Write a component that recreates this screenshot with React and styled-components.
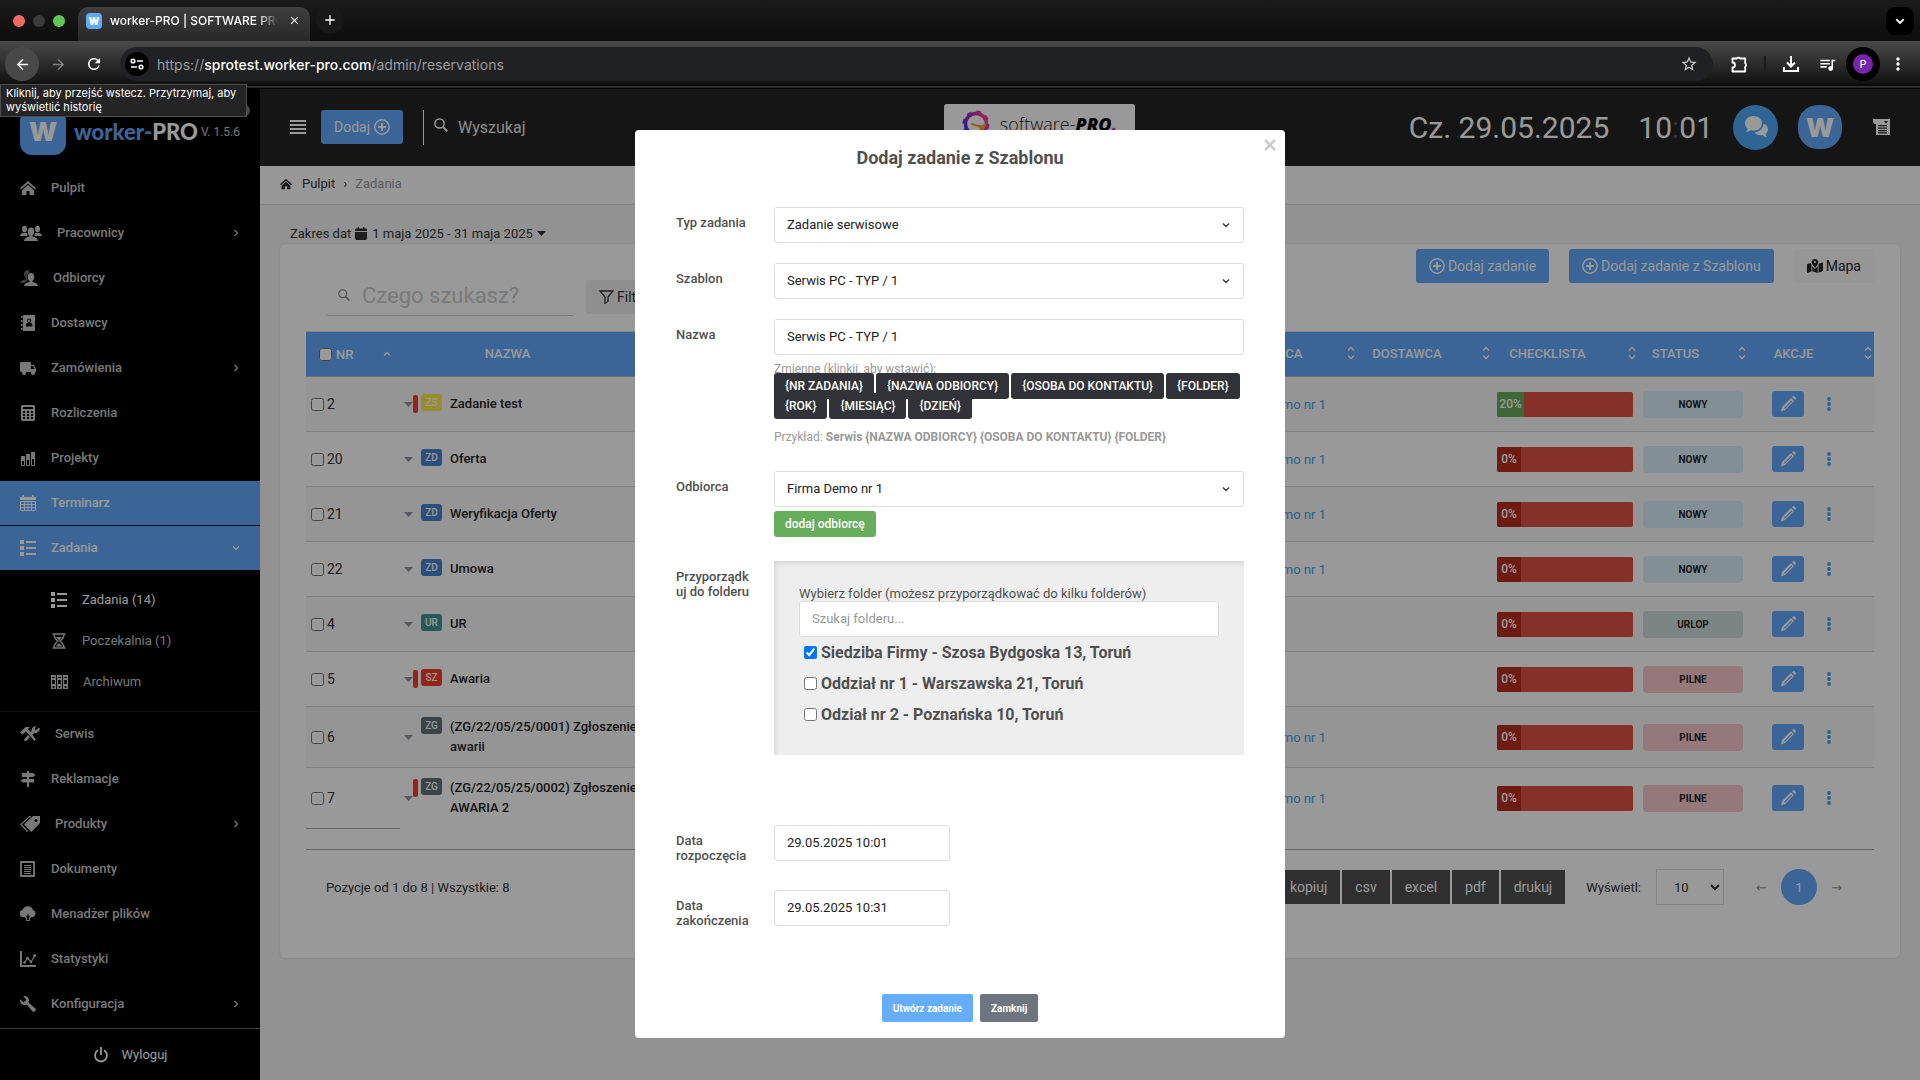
import React, { useState } from "react";
import styled, { createGlobalStyle, css } from "styled-components";
import {
  MdArrowBack,
  MdArrowForward,
  MdRefresh,
  MdStarBorder,
  MdQueueMusic,
  MdMoreVert,
  MdClose,
  MdAdd,
} from "react-icons/md";
import { ImTruck, ImWrench } from "react-icons/im";
import { FaMapLocationDot } from "react-icons/fa6";

const GlobalStyle = createGlobalStyle`
  * {
    box-sizing: border-box;
  }
  body {
    margin: 0;
    font-family: Roboto, "Liberation Sans", sans-serif;
    font-size: 13px;
    color: #333;
    background: #f3f3f3;
  }
  button, input, select {
    font-family: inherit;
  }
`;

/* ---------- Icons ---------- */

const Svg = ({ w = 16, h = 16, box, children }) => (
  <svg width={w} height={h} viewBox={box || `0 0 ${w} ${h}`} fill="currentColor" aria-hidden="true">
    {children}
  </svg>
);

const line = (width = 1.5) => ({ fill: "none", stroke: "currentColor", strokeWidth: width });

const HomeIcon = ({ size = 16 }) => (
  <Svg w={size} h={size} box="0 0 16 16">
    <path d="M8 1 0 8.2 1.2 9.6 8 3.6l6.8 6L16 8.2Z" />
    <path d="M8 5 2 10.3V15h4.5v-4h3v4H14v-4.7Z" />
  </Svg>
);

const UsersIcon = () => (
  <Svg w={22}>
    <ellipse cx="4.5" cy="4" rx="2.5" ry="3.2" />
    <ellipse cx="17.5" cy="4" rx="2.5" ry="3.2" />
    <path d="M0 11c0-2 1.500-2.800 3.500-3.200h2.500c1 .3 1.500 1 1.500 3.200ZM22 11c0-2-1.500-2.800-3.500-3.200H16c-1 .3-1.500 1-1.500 3.200Z" />
    <ellipse cx="11" cy="6.500" rx="3.2" ry="4" />
    <path d="M9.500 9h3v2.500c3 .3 5 1.500 5.500 4.500H4c.5-3 2.500-4.200 5.500-4.500Z" />
  </Svg>
);

const UserPairIcon = () => (
  <Svg w={18}>
    <path
      opacity="0.5"
      d="M8.500 0C5.500 0 4 1.500 4 4c0 2 .8 3.500 2 4.200v1C3 9.700.5 10.500 0 13h4.500c1-1.500 2.500-2 3.500-2.500-1.500-2-2-6 2-8Z"
    />
    <ellipse cx="11" cy="7" rx="3.3" ry="4" />
    <path d="M9.500 10h3v2c3 .3 5 1.500 5.500 4H4c.5-2.500 2.500-3.700 5.500-4Z" />
  </Svg>
);

const AddressIcon = () => (
  <Svg>
    <path
      fillRule="evenodd"
      d="M3 0h12v16H3Zm6 3.500a2 2 0 0 0-2 2c0 1 .4 1.700 1 2.100C6.700 8 6 9 6 11.500h6.500C12.500 9 11.500 8 10.300 7.600c.5-.4.8-1.100.8-2.100 0-1.200-1-2-2.100-2Zm0 1c.6 0 1 .4 1 1.200S9.600 7.300 9 7.300s-1-.7-1-1.600.4-1.200 1-1.200Z"
    />
    <path d="M1 1h1.500v2H1Zm0 4h1.500v2H1Zm0 4h1.500v2H1Zm0 4h1.500v2H1Z" />
  </Svg>
);

const CalculatorIcon = () => (
  <Svg>
    <path
      fillRule="evenodd"
      d="M2 0h12l1 1v14l-1 1H2l-1-1V1Zm1 2v2h10V2ZM3 6v2h2V6Zm4 0v2h2V6Zm4 0v2h2V6ZM3 9v2h2V9Zm4 0v2h2V9Zm4 0v2h2V9Zm-8 3v2h2v-2Zm4 0v2h2v-2Zm4 0v2h2v-2Z"
    />
  </Svg>
);

const ProjectsIcon = () => (
  <Svg>
    <path d="M1 6h4v5H1Zm5-2h4v6H6Zm5-2h4v7h-4Z" />
    <path {...line(1)} d="M1.500 10.500v5h3v-5M6.500 9.500v6h3v-6M11.500 8.500v7h3v-7" />
  </Svg>
);

const CalendarIcon = () => (
  <Svg>
    <path d="M0 2h16v3H0ZM2.500 0H4v3H2.500ZM12 0h1.500v3H12Z" />
    <path {...line(1)} d="M.5 6.500h15v9H.5ZM.5 9.500h15M.5 12.500h15M4.500 6.500v9M8 6.500v9M11.500 6.500v9" />
  </Svg>
);

const ListIcon = () => (
  <Svg>
    <path d="M0 0h4v4H0Zm0 6h4v4H0Zm0 6h4v4H0ZM6 1h10v2H6Zm0 6h10v2H6Zm0 6h10v2H6Z" />
  </Svg>
);

const HourglassIcon = () => (
  <Svg>
    <path {...line(1.5)} d="M1.500 1h13M1.500 15h13M3 1c0 4 1.500 5 4 7-2.500 2-4 3-4 7M13 1c0 4-1.500 5-4 7 2.500 2 4 3 4 7" />
    <path d="M5 4h6L8 7.500ZM4.500 13.500 8 10l3.500 3.500Z" />
  </Svg>
);

const ArchiveIcon = () => (
  <Svg w={17}>
    <path
      fillRule="evenodd"
      d="M0 1h5v14H0Zm1.200 2v1h2.600V3Zm0 3v4h2.600V6Zm1.300 6a1 1 0 1 0 .01 0ZM6 1h5v14H6Zm1.200 2v1h2.600V3Zm0 3v4h2.600V6Zm1.300 6a1 1 0 1 0 .01 0ZM12 1h5v14h-5Zm1.200 2v1h2.600V3Zm0 3v4h2.600V6Zm1.300 6a1 1 0 1 0 .01 0Z"
    />
  </Svg>
);

const ToolsIcon = () => (
  <Svg w={20}>
    <path d="M0 6.500 5.500 1H10L8 3l8 10.500L14.500 15 6 5.500 2.500 8.500Z" />
    <path d="M18.500 1.500 16.500 4 15 3.500 14.800 2 16.500.3c-3-.6-5 1.500-4.600 4L9.500 7l2 2.500L14.500 7c2.800.4 5.500-2 5.300-4.500ZM8 9l2 2-3 3.500c-.8 1.300-3 1-3-1Z" />
  </Svg>
);

const SignIcon = () => (
  <Svg>
    <path d="M7 0h2v16H7Z" />
    <path d="M2 2h11l2.500 2L13 6H2ZM14 8v3.500H3L.5 9.700 3 8Z" />
  </Svg>
);

const TagsIcon = () => (
  <Svg w={20}>
    <path fillRule="evenodd" d="M13 0h7v7l-8.500 9L4 8.500ZM16 3a1.500 1.500 0 1 0 .01 0Z" />
    <path {...line(1.2)} d="M11 .6H9.500L1 8.500 7.500 15.500" />
  </Svg>
);

const DocIcon = () => (
  <Svg>
    <path {...line(1.8)} d="M1 1h13v14H1Z" />
    <path {...line(1)} d="M4 4.500h7M4 6.500h7M4 8.500h7M4 10.500h7M4 12.500h7" />
  </Svg>
);

const CloudIcon = () => (
  <Svg>
    <path d="M3.500 11A3.500 3.500 0 0 1 2.600 4 5.500 5.500 0 0 1 13 4a3.600 3.600 0 0 1-.7 7H10.500L8 7.500 5.500 11Z" />
    <path {...line(1)} d="M8 8.500 5 11.500h1.500v3h3v-3H11Z" />
  </Svg>
);

const StatsIcon = () => (
  <Svg>
    <path d="M0 0h2v14h14v2H0Z" />
    <path {...line(1.3)} d="m4.500 11.500 3-4.500 3.500 4 4-6.500" />
    <circle cx="4.5" cy="11.5" r="1.3" />
    <circle cx="7.5" cy="7" r="1.3" />
    <circle cx="11" cy="11" r="1.3" />
    <circle cx="14.5" cy="4.5" r="1.5" />
  </Svg>
);

const PowerIcon = () => (
  <Svg>
    <path {...line(1.8)} d="M5 3.300a6 6 0 1 0 6 0M8 0v8" />
  </Svg>
);

const PlusCircleIcon = () => (
  <Svg>
    <circle {...line(1.5)} cx="8" cy="8" r="7.200" />
    <path d="M7 4h2v3h3v2H9v3H7V9H4V7h3Z" />
  </Svg>
);

const SearchIcon = ({ size = 14 }) => (
  <Svg w={size} h={size} box="0 0 14 14">
    <circle {...line(1.5)} cx="5.5" cy="5.5" r="4.600" />
    <path {...line(1.8)} d="m9 9 4.300 4.300" />
  </Svg>
);

const FilterIcon = () => (
  <Svg w={15} h={14}>
    <path {...line(1.3)} d="M1 1h13L9 7v4.500L6 13.300V7Z" />
  </Svg>
);

const Chevron = ({ dir = "down", size = 8, weight = 1.3 }) => {
  const d = { down: "m1 2.500 3 3 3-3", up: "m1 5.500 3-3 3 3", right: "m2.500 1 3 3-3 3" }[dir];
  return (
    <Svg w={size} h={size} box="0 0 8 8">
      <path {...line(weight)} d={d} />
    </Svg>
  );
};

const SortIcon = () => (
  <Svg w={8} h={14}>
    <path {...line(1.3)} d="m1 4.500 3-3 3 3M1 9.500l3 3 3-3" />
  </Svg>
);

const Caret = () => (
  <Svg w={9} h={5}>
    <path d="M0 0h9L4.500 5Z" />
  </Svg>
);

const PencilIcon = () => (
  <Svg>
    <path fillRule="evenodd" d="M1 15.500 2 11 11 2l3 3-9 9ZM4 12l.8.8 7.400-7.500-.8-.8Z" />
    <path d="m12 1.300 1-.9c.5-.4 1-.4 1.500 0l1.200 1.200c.4.5.4 1 0 1.500l-.9 1Z" />
  </Svg>
);

const KebabIcon = () => (
  <Svg w={4} h={14}>
    <circle cx="2" cy="2" r="1.900" />
    <circle cx="2" cy="7" r="1.900" />
    <circle cx="2" cy="12" r="1.900" />
  </Svg>
);

const DateIcon = () => (
  <Svg w={12} h={13}>
    <path d="M0 5h12v7l-1 1H1l-1-1ZM0 4V2.500L1 1.500h1.500V0H4v1.500h4V0h1.500v1.500H11l1 1V4Z" />
  </Svg>
);

const BubblesIcon = () => (
  <Svg w={24} h={24}>
    <path d="M9.500 1C4.500 1 1 4.200 1 8.300c0 2.200 1 4 2.500 5.200 0 1.300-.8 2.500-2 3.500 2 0 3.800-.6 5-1.700 1 .3 2 .4 3 .4 5 0 8.500-3.300 8.500-7.400S14.500 1 9.500 1Z" />
    <path d="M19.500 8.500c0 4.800-4 8.500-9 8.700 1.500 2.200 4.700 3.600 8 2.900 1 1 2.700 2 4.700 2-1-.9-1.500-1.900-1.500-3.100 1.300-1.100 2.300-2.600 2.300-4.500 0-2.700-1.800-5-4.500-6Z" />
  </Svg>
);

const ScrollIcon = () => (
  <Svg w={17}>
    <path fillRule="evenodd" d="M0 0h17v16H3V5H1.500L0 3.500ZM5 6v1.200h9V6Zm0 2.500v1.200h9V8.500ZM5 11v1.200h9V11Zm0 2.300v1.200h9v-1.200ZM11 2l2 2.500L15 2Z" />
  </Svg>
);

const TuneIcon = () => (
  <Svg w={14} h={12}>
    <circle {...line(1.6)} cx="3" cy="3" r="1.800" />
    <circle {...line(1.6)} cx="11" cy="9" r="1.800" />
    <path {...line(1.6)} d="M7 3h6M1 9h6" />
  </Svg>
);

const DownloadIcon = () => (
  <Svg>
    <path {...line(2)} d="M1 11v4h14v-4M8 0v10M4 6.500l4 4 4-4" />
  </Svg>
);

const PuzzleIcon = () => (
  <Svg w={17} h={17}>
    <path {...line(1.8)} strokeLinejoin="round" d="M1.500 2.500h4.300a1.800 1.200 0 0 1 3.400 0h5v4.800a1.200 1.800 0 0 1 0 3.400v4.800H1.500v-4a2.500 2.500 0 0 0 0-5Z" />
  </Svg>
);

const CrossIcon = () => (
  <Svg w={12} h={12}>
    <path {...line(2.5)} d="m1 1 10 10M11 1 1 11" />
  </Svg>
);

const GearLogo = () => (
  <Svg w={28} h={28}>
    <defs>
      <linearGradient id="gear" x1="0" y1="0.8" x2="1" y2="0.200">
        <stop offset="0" stopColor="#4a28f0" />
        <stop offset="0.500" stopColor="#b02fc0" />
        <stop offset="1" stopColor="#ff3d90" />
      </linearGradient>
    </defs>
    <circle cx="14" cy="14" r="10.500" fill="none" stroke="url(#gear)" strokeWidth="3.500" />
    <circle cx="14" cy="14" r="12.500" fill="none" stroke="url(#gear)" strokeWidth="2" strokeDasharray="5 4.800" />
    <path d="M8 14c3-2 6 1 9 1 3 .5 5-.5 7-2 0 6-4 9-9 9 3-2 4-4 1-5-2-1-5-1-8-3Z" fill="#f0a53a" />
  </Svg>
);

/* ---------- Browser bar ---------- */

const Screen = styled.div`
  min-height: 100vh;
  display: flex;
  flex-direction: column;
`;

const Browser = styled.header`
  position: relative;
  z-index: 3;
  font-family: Inter, "Liberation Sans", sans-serif;
  color: #fff;
  background: #151515;
`;

const TabStrip = styled.div`
  height: 41px;
  display: flex;
  align-items: flex-end;
  padding: 0 6px 0 13px;
  background: linear-gradient(#1a1a1a, #0d0d0d);
`;

const Lights = styled.div`
  display: flex;
  gap: 8px;
  height: 41px;
  align-items: center;
  margin-right: 13px;
`;

const Light = styled.span`
  width: 12px;
  height: 12px;
  border-radius: 50%;
  background: ${({ $color }) => $color};
`;

const Tab = styled.div`
  width: 232px;
  height: 34px;
  display: flex;
  align-items: center;
  gap: 8px;
  padding: 0 8px 7px;
  border-radius: 10px 10px 0 0;
  background: linear-gradient(#3f3f3f, #282828);
`;

const WLogo = styled.span`
  display: flex;
  align-items: center;
  justify-content: center;
  flex: none;
  width: ${({ $size }) => $size}px;
  height: ${({ $size }) => $size}px;
  border-radius: ${({ $radius }) => $radius}px;
  background: #62a9fa;
  color: #fff;
  font: 900 ${({ $font }) => $font}px Inter, sans-serif;
`;

const TabTitle = styled.span`
  flex: 1;
  overflow: hidden;
  white-space: nowrap;
  font-size: 12px;
  font-weight: 500;
  mask-image: linear-gradient(to right, #000 88%, transparent);
`;

const BarButton = styled.button`
  display: flex;
  align-items: center;
  justify-content: center;
  flex: none;
  width: ${({ $w }) => $w || 34}px;
  height: ${({ $h }) => $h || 34}px;
  border: 0;
  padding: 0;
  border-radius: ${({ $radius }) => $radius || "50%"};
  background: ${({ $bg }) => $bg || "none"};
  color: ${({ $color }) => $color || "#fff"};
`;

const NewTab = styled(BarButton)`
  margin: 0 auto 7px 6px;
`;

const TabSearch = styled(BarButton)`
  margin-bottom: 6px;
`;

const ToolBar = styled.div`
  height: 48px;
  display: flex;
  align-items: center;
  padding: 0 4px 2px 5px;
  background: linear-gradient(#4a4a4a, #111 43px, #000 44px, #151515 45px, #4c4c4c 46px, #000 47px);
`;

const UrlBox = styled.div`
  flex: 1;
  height: 34px;
  display: flex;
  align-items: center;
  gap: 8px;
  margin-left: 9px;
  padding: 0 12px 0 5px;
  border-radius: 17px;
  background: #202124;
  color: #9a9a9c;
  font-size: 14px;
`;

const Url = styled.span`
  flex: 1;
  b {
    font-weight: 500;
    color: #fff;
  }
`;

const BarTools = styled.div`
  display: flex;
  align-items: center;
  margin-left: 9px;
`;

const Separator = styled.span`
  width: 2px;
  height: 16px;
  background: #1c1c1c;
  margin: 0 8px;
`;

const Avatar = styled.span`
  display: flex;
  align-items: center;
  justify-content: center;
  width: 20px;
  height: 20px;
  border-radius: 50%;
  background: #7627a5;
  font-size: 11px;
`;

const Tooltip = styled.div`
  position: absolute;
  left: 0;
  top: 84px;
  width: 247px;
  padding: 1px 5px 2px;
  border: 1px solid #4d4d4d;
  background: #242424;
  font-size: 11px;
  line-height: 14px;
`;

/* ---------- Sidebar ---------- */

const Page = styled.div`
  position: relative;
  flex: 1;
  display: flex;
`;

const Sidebar = styled.aside`
  width: 260px;
  flex: none;
  display: flex;
  flex-direction: column;
  background: #000;
  color: #c8c8c8;
`;

const Brand = styled.div`
  position: relative;
  height: 77px;
  display: flex;
  align-items: center;
  padding: 8px 20px 0;
  font-size: 12px;
  white-space: nowrap;
`;

const BrandName = styled.span`
  margin: 0 3px 0 8px;
  font: 900 22px Lato, sans-serif;
  color: #fff;
  em {
    font-style: normal;
    color: #62a9fa;
  }
`;

const BrandBubble = styled.span`
  position: absolute;
  top: 15px;
  right: 10px;
  width: 14px;
  height: 13px;
  border-radius: 50%;
  background: #777;
`;

const NavItem = styled.a`
  height: 44px;
  margin-bottom: 1px;
  display: flex;
  align-items: center;
  gap: 15px;
  padding: 0 20px 1px;
  font-weight: 500;
  text-decoration: none;
  color: inherit;
  ${({ $active }) =>
    $active &&
    css`
      background: #62a9fa;
      color: #fff;
    `}
  span {
    flex: 1;
  }
`;

const SubNav = styled.div`
  padding: 8px 0 9px;
  border-bottom: 1px solid #1a1a1a;
`;

const SubItem = styled.a`
  height: 41px;
  display: flex;
  align-items: center;
  gap: 15px;
  padding-left: 51px;
  text-decoration: none;
  color: ${({ $active }) => ($active ? "#fff" : "#c8c8c8")};
`;

const Logout = styled.button`
  height: 52px;
  margin-top: auto;
  display: flex;
  align-items: center;
  justify-content: center;
  gap: 13px;
  border: 0;
  border-top: 1px solid #666;
  background: none;
  color: #fff;
  font-size: 13px;
`;

/* ---------- Main ---------- */

const Main = styled.main`
  flex: 1;
  min-width: 0;
`;

const TopBar = styled.div`
  height: 77px;
  display: grid;
  grid-template-columns: 654px 191px 1fr;
  align-items: center;
  padding: 0 30px 1px;
  background: #232323;
  color: #fff;
`;

const TopLeft = styled.div`
  display: flex;
  align-items: center;
`;

const PlainButton = styled.button`
  display: flex;
  align-items: center;
  justify-content: center;
  padding: 0;
  border: 0;
  background: none;
  color: ${({ $color }) => $color || "inherit"};
`;

const Button = styled.button`
  height: 34px;
  display: flex;
  align-items: center;
  gap: 3px;
  padding: 0 13px;
  border: 0;
  border-radius: 3px;
  background: ${({ $bg }) => $bg || "#62a9fa"};
  color: ${({ $color }) => $color || "#fff"};
  font-size: 14px;
`;

const AddButton = styled(Button)`
  gap: 4px;
  margin-left: 15px;
`;

const GlobalSearch = styled.label`
  display: flex;
  align-items: center;
  gap: 10px;
  height: 35px;
  margin-left: 20px;
  padding-left: 10px;
  border-left: 1px solid #fff;
  svg {
    margin-bottom: 4px;
  }
  input {
    width: 200px;
    padding: 0;
    border: 0;
    background: none;
    font-size: 16px;
    &::placeholder {
      color: #e6e6e6;
    }
  }
`;

const Partner = styled.div`
  height: 46px;
  display: flex;
  align-items: center;
  justify-content: center;
  gap: 10px;
  padding-bottom: 6px;
  border-radius: 3px;
  background: #fff;
  color: #222;
  font: 300 18px "Open Sans", sans-serif;
  b {
    font-weight: 800;
    font-style: italic;
    color: #000;
  }
  i {
    font-weight: 800;
    color: #d63ac0;
  }
`;

const TopRight = styled.div`
  display: flex;
  align-items: center;
  justify-content: flex-end;
  font-size: 30px;
`;

const Clock = styled.span`
  margin: 0 20px 0 29px;
  i {
    font-style: normal;
    color: #555;
  }
`;

const ChatButton = styled(PlainButton)`
  width: 45px;
  height: 45px;
  margin-right: 20px;
  border-radius: 50%;
  background: #4ea8f8;
`;

const ListButton = styled(PlainButton)`
  margin-left: 31px;
`;

const Breadcrumb = styled.nav`
  height: 39px;
  display: flex;
  align-items: center;
  gap: 8px;
  padding: 0 20px 3px;
  border-bottom: 1px solid #dadada;
  background: #fefefe;
  svg {
    margin-right: 2px;
  }
  a {
    color: inherit;
    text-decoration: none;
  }
  span {
    color: #999;
  }
`;

const Content = styled.div`
  padding: 0 20px;
`;

const DateRange = styled.button`
  height: 39px;
  display: flex;
  align-items: center;
  gap: 4px;
  padding: 18px 10px 0;
  border: 0;
  background: none;
  color: #333;
  font-size: 13px;
  span {
    margin-left: 1px;
  }
`;

const Panel = styled.section`
  padding: 5px 26px 52px;
  border-radius: 6px;
  background: #fff;
  box-shadow: 0 0 3px rgba(0, 0, 0, 0.1);
`;

const Tools = styled.div`
  height: 82px;
  display: flex;
  justify-content: space-between;
  padding-bottom: 15px;
`;

const FilterTools = styled.div`
  display: flex;
  align-items: flex-end;
  gap: 11px;
  margin-left: 20px;
`;

const TableSearch = styled.label`
  width: 249px;
  height: 41px;
  display: flex;
  align-items: center;
  gap: 12px;
  padding-left: 12px;
  border-bottom: 1px solid #ccc;
  border-radius: 3px;
  color: #888;
  input {
    width: 190px;
    padding: 0;
    border: 0;
    font-size: 22px;
    &::placeholder {
      color: #ccc;
    }
  }
`;

const FilterButton = styled(Button)`
  margin-bottom: 2px;
`;

const Actions = styled.div`
  display: flex;
  gap: 20px;
`;

const Table = styled.table`
  width: 100%;
  table-layout: fixed;
  border-collapse: collapse;
  border-bottom: 1px solid #aaa;
  td, th {
    padding: 0 5px;
    text-align: left;
  }
`;

const HeadRow = styled.tr`
  height: 45px;
  background: #62a9fa;
  border-top: 1px solid #ddd;
  border-bottom: 1px solid #bbb;
  color: #fff;
`;

const HeadCell = styled.div`
  display: flex;
  align-items: center;
  padding-bottom: 2px;
  font-weight: 500;
  span {
    flex: 1;
    text-align: center;
  }
  svg {
    flex: none;
    margin-right: -3px;
    margin-left: 30px;
  }
`;

const SelectAll = styled.label`
  display: flex;
  align-items: center;
  gap: 4px;
  padding-left: 8px;
  font-weight: 500;
  svg:last-child {
    margin-right: 4px;
    margin-left: auto;
  }
`;

const Row = styled.tr`
  height: ${({ $tall }) => ($tall ? 61 : 55)}px;
  background: ${({ $odd }) => ($odd ? "#f9f9f9" : "#fff")};
  border-bottom: 1px solid ${({ $last }) => ($last ? "transparent" : "#d9d9d9")};
  td:first-child {
    border-bottom: 1px solid ${({ $last }) => ($last ? "#aaa" : "#d9d9d9")};
  }
`;

const Spacer = styled.tr`
  height: 21px;
`;

const Check = styled.input`
  width: 13px;
  height: 13px;
  margin: 0;
`;

const RowNumber = styled.label`
  display: flex;
  align-items: center;
  gap: 3px;
  font-size: 14px;
`;

const Task = styled.div`
  display: flex;
  align-items: center;
  color: #92929f;
  svg {
    flex: none;
    margin-left: -1px;
  }
`;

const Marker = styled.span`
  flex: none;
  width: 5px;
  height: 18px;
  margin: 1px 3px 0 0;
  border-radius: 2px;
  background: ${({ $on }) => ($on ? "#f73b2b" : "transparent")};
`;

const TaskBody = styled.div`
  display: flex;
  align-items: flex-start;
  color: #222;
  font-weight: 500;
  line-height: 20px;
`;

const Badge = styled.span`
  flex: none;
  width: 21px;
  margin-right: 8px;
  border-radius: 3px;
  background: ${({ $color }) => $color};
  color: #fff;
  font-size: 10px;
  font-weight: 500;
  line-height: 17px;
  text-align: center;
`;

const Client = styled.a`
  display: block;
  padding-left: 6px;
  color: #42a5e8;
  text-decoration: none;
  white-space: nowrap;
`;

const Progress = styled.div`
  height: 25px;
  border-radius: 2px;
  overflow: hidden;
  background: #de5043;
`;

const ProgressFill = styled.div`
  min-width: 24px;
  background: ${({ $done }) => ($done ? "#66ae5b" : "#b82d1e")};
  color: #fff;
  font-size: 12px;
  font-weight: 500;
  line-height: 25px;
  text-align: center;
`;

const Status = styled.span`
  display: block;
  border-radius: 4px;
  background: ${({ $color }) => $color};
  color: #222;
  font-size: 10px;
  font-weight: 700;
  line-height: 27px;
  text-align: center;
`;

const RowActions = styled.div`
  display: flex;
  align-items: center;
  gap: 23px;
  padding-left: 19px;
`;

const EditButton = styled(PlainButton)`
  width: 32px;
  height: 26px;
  border-radius: 3px;
  background: #62a9fa;
  color: #fff;
`;

const Footer = styled.div`
  display: flex;
  align-items: center;
  justify-content: flex-end;
  padding: 19px 32px 1px 20px;
`;

const Summary = styled.span`
  margin-right: auto;
`;

const Exports = styled.div`
  display: flex;
  gap: 2px;
  margin-right: 21px;
`;

const ExportButton = styled(Button)`
  border-radius: 0;
`;

const PageSize = styled.label`
  display: flex;
  align-items: center;
  gap: 15px;
  margin-right: 32px;
  select {
    width: 68px;
    height: 36px;
    padding: 0 0 0 13px;
    border: 1px solid #ddd;
    background: #fff;
    color: #333;
    font-size: 13px;
  }
`;

const Pager = styled.div`
  display: flex;
  align-items: center;
  gap: 14px;
  color: #999;
`;

const PagerArrow = styled(PlainButton)`
  width: 11px;
  font: 13px "DejaVu Sans", sans-serif;
`;

const CurrentPage = styled.button`
  width: 36px;
  height: 36px;
  border: 0;
  border-radius: 50%;
  background: #62a9fa;
  color: #fff;
  font-size: 13px;
`;

/* ---------- Modal ---------- */

const Backdrop = styled.div`
  position: absolute;
  inset: 0;
  display: flex;
  justify-content: center;
  align-items: flex-start;
  padding-top: 41px;
  background: rgba(0, 0, 0, 0.4);
`;

const Modal = styled.div`
  position: relative;
  width: 650px;
  padding: 16px 41px;
  border-radius: 4px;
  background: #fff;
`;

const ModalTitle = styled.h2`
  margin: 0 0 37px;
  color: #505050;
  font-size: 18px;
  font-weight: 700;
  line-height: 24px;
  text-align: center;
`;

const CloseButton = styled.button`
  position: absolute;
  top: 9px;
  right: 9px;
  padding: 0;
  border: 0;
  background: none;
  color: #ccc;
  line-height: 0;
`;

const Field = styled.div`
  display: grid;
  grid-template-columns: 98px 1fr;
  margin-bottom: ${({ $gap }) => $gap || 20}px;
`;

const FieldLabel = styled.label`
  width: 76px;
  padding-top: 8px;
  color: #505050;
  font-weight: 500;
  line-height: 15px;
  overflow-wrap: anywhere;
`;

const boxed = css`
  width: 100%;
  height: 36px;
  padding: 0 12px 2px;
  border: 1px solid #ddd;
  border-radius: 3px;
  background: #fff;
  color: #222;
  font-size: 13px;
`;

const TextInput = styled.input`
  ${boxed}
  max-width: ${({ $max }) => $max || "none"};
  &::placeholder {
    color: #999;
  }
`;

const SelectBox = styled.div`
  display: grid;
  align-items: center;
  select {
    ${boxed}
    grid-area: 1 / 1;
    appearance: none;
  }
  svg {
    grid-area: 1 / 1;
    justify-self: end;
    margin-right: 14px;
    pointer-events: none;
  }
`;

const Hint = styled.div`
  color: #999;
  font-size: 12px;
  line-height: 18px;
`;

const Variables = styled.div`
  display: flex;
  flex-wrap: wrap;
  column-gap: 2px;
  margin-top: -5px;
  padding-bottom: 15px;
`;

const Chip = styled.button`
  position: relative;
  height: 26px;
  margin-bottom: -6px;
  padding: 0 11px;
  border: 0;
  border-radius: 3px;
  background: ${({ $bg }) => $bg || "#323338"};
  color: #fff;
  font-size: 12px;
  font-weight: 500;
`;

const AddClient = styled(Chip)`
  margin: 4px 0 0;
`;

const HintBlock = styled.div`
  padding-top: 5px;
`;

const FolderBox = styled.div`
  padding: 25px;
  background: #eee;
  box-shadow: inset 3px 4px 6px -3px rgba(0, 0, 0, 0.15);
  color: #505050;
  p {
    margin: 0;
    line-height: 15px;
  }
`;

const FolderOption = styled.label`
  display: flex;
  align-items: center;
  gap: 4px;
  height: 31px;
  padding-left: 5px;
  font-size: 16px;
  font-weight: 700;
`;

const ModalFooter = styled.div`
  display: flex;
  justify-content: center;
  gap: 7px;
  padding-top: 4px;
`;

const SmallButton = styled.button`
  height: 28px;
  padding: 0 11px;
  border: 0;
  border-radius: 2px;
  background: ${({ $bg }) => $bg};
  color: #fff;
  font-size: 10px;
  font-weight: 700;
`;

/* ---------- Data ---------- */

const menuTop = [
  { label: "Pulpit", icon: <HomeIcon /> },
  { label: "Pracownicy", icon: <UsersIcon />, more: "right" },
  { label: "Odbiorcy", icon: <UserPairIcon /> },
  { label: "Dostawcy", icon: <AddressIcon /> },
  { label: "Zamówienia", icon: <ImTruck size={16} />, more: "right" },
  { label: "Rozliczenia", icon: <CalculatorIcon /> },
  { label: "Projekty", icon: <ProjectsIcon /> },
  { label: "Terminarz", icon: <CalendarIcon />, active: true },
  { label: "Zadania", icon: <ListIcon />, active: true, more: "down" },
];

const menuBottom = [
  { label: "Serwis", icon: <ToolsIcon /> },
  { label: "Reklamacje", icon: <SignIcon /> },
  { label: "Produkty", icon: <TagsIcon />, more: "right" },
  { label: "Dokumenty", icon: <DocIcon /> },
  { label: "Menadżer plików", icon: <CloudIcon /> },
  { label: "Statystyki", icon: <StatsIcon /> },
  { label: "Konfiguracja", icon: <ImWrench size={16} />, more: "right" },
];

const badgeColors = { ZS: "#fbec50", ZD: "#4884cf", UR: "#3e9690", SZ: "#f73b2b", ZG: "#637177" };
const statusColors = { NOWY: "#d9f0fb", URLOP: "#cddeda", PILNE: "#f8c8cd" };

const tasks = [
  { nr: 2, type: "ZS", name: "Zadanie test", late: true, client: true, done: 20, status: "NOWY" },
  { nr: 20, type: "ZD", name: "Oferta", client: true, done: 0, status: "NOWY" },
  { nr: 21, type: "ZD", name: "Weryfikacja Oferty", client: true, done: 0, status: "NOWY" },
  { nr: 22, type: "ZD", name: "Umowa", client: true, done: 0, status: "NOWY" },
  { nr: 4, type: "UR", name: "UR", done: 0, status: "URLOP" },
  { nr: 5, type: "SZ", name: "Awaria", late: true, done: 0, status: "PILNE" },
  { nr: 6, type: "ZG", name: "(ZG/22/05/25/0001) Zgłoszenie awarii", tall: true, client: true, done: 0, status: "PILNE" },
  { nr: 7, type: "ZG", name: "(ZG/22/05/25/0002) Zgłoszenie AWARIA 2", tall: true, late: true, client: true, done: 0, status: "PILNE" },
];

const variables = ["{NR ZADANIA}", "{NAZWA ODBIORCY}", "{OSOBA DO KONTAKTU}", "{FOLDER}", "{ROK}", "{MIESIĄC}", "{DZIEŃ}"];

const folders = [
  "Siedziba Firmy - Szosa Bydgoska 13, Toruń",
  "Oddział nr 1 - Warszawska 21, Toruń",
  "Odział nr 2 - Poznańska 10, Toruń",
];

/* ---------- Components ---------- */

const BrowserBar = () => (
  <Browser>
    <TabStrip>
      <Lights>
        <Light $color="#ed6a5e" />
        <Light $color="#3b3b3b" />
        <Light $color="#61c554" />
      </Lights>
      <Tab>
        <WLogo $size={16} $radius={4} $font={10}>W</WLogo>
        <TabTitle>worker-PRO | SOFTWARE PRO</TabTitle>
        <BarButton $w={16} $h={16} aria-label="Zamknij kartę">
          <MdClose size={13} />
        </BarButton>
      </Tab>
      <NewTab $w={28} $h={28} $bg="#181818" aria-label="Nowa karta">
        <MdAdd size={16} />
      </NewTab>
      <TabSearch $w={28} $h={28} $bg="#000" $radius="9px" aria-label="Szukaj kart">
        <Chevron size={10} weight={1.5} />
      </TabSearch>
    </TabStrip>
    <ToolBar>
      <BarButton $bg="#484848" aria-label="Wstecz">
        <MdArrowBack size={17} />
      </BarButton>
      <BarButton $w={38} $color="#7d7d7d" aria-label="Dalej">
        <MdArrowForward size={17} />
      </BarButton>
      <BarButton aria-label="Odśwież">
        <MdRefresh size={18} />
      </BarButton>
      <UrlBox>
        <BarButton $w={24} $h={24} $bg="#000" aria-label="Informacje o stronie">
          <TuneIcon />
        </BarButton>
        <Url>
          https://<b>sprotest.worker-pro.com</b>/admin/reservations
        </Url>
        <BarButton $w={24} $h={24} $color="#ccc" aria-label="Dodaj do zakładek">
          <MdStarBorder size={18} />
        </BarButton>
      </UrlBox>
      <BarTools>
        <BarButton aria-label="Rozszerzenia">
          <PuzzleIcon />
        </BarButton>
        <Separator />
        <BarButton aria-label="Pobrane">
          <DownloadIcon />
        </BarButton>
        <BarButton $w={38} aria-label="Multimedia">
          <MdQueueMusic size={19} />
        </BarButton>
        <BarButton $bg="#000" aria-label="Profil">
          <Avatar>P</Avatar>
        </BarButton>
        <BarButton $w={36} aria-label="Menu">
          <MdMoreVert size={20} />
        </BarButton>
      </BarTools>
    </ToolBar>
    <Tooltip role="tooltip">Kliknij, aby przejść wstecz. Przytrzymaj, aby wyświetlić historię</Tooltip>
  </Browser>
);

const Menu = ({ items }) =>
  items.map((item) => (
    <NavItem key={item.label} href="#" $active={item.active}>
      {item.icon}
      <span>{item.label}</span>
      {item.more && <Chevron dir={item.more} />}
    </NavItem>
  ));

const SideBar = () => (
  <Sidebar>
    <Brand>
      <WLogo $size={46} $radius={12} $font={26}>W</WLogo>
      <BrandName>
        <em>worker-</em>PRO
      </BrandName>
      V. 1.5.6
      <BrandBubble />
    </Brand>
    <Menu items={menuTop} />
    <SubNav>
      <SubItem href="#" $active>
        <ListIcon /> Zadania (14)
      </SubItem>
      <SubItem href="#">
        <HourglassIcon /> Poczekalnia (1)
      </SubItem>
      <SubItem href="#">
        <ArchiveIcon /> Archiwum
      </SubItem>
    </SubNav>
    <Menu items={menuBottom} />
    <Logout>
      <PowerIcon /> Wyloguj
    </Logout>
  </Sidebar>
);

const Head = ({ children }) => (
  <th>
    <HeadCell>
      <span>{children}</span>
      <SortIcon />
    </HeadCell>
  </th>
);

const TaskTable = () => (
  <Table>
    <colgroup>
      <col width="94" />
      <col width="250" />
      <col />
      <col width="138" />
      <col width="135" />
      <col width="146" />
      <col width="110" />
      <col width="126" />
    </colgroup>
    <thead>
      <HeadRow>
        <th>
          <SelectAll>
            <Check type="checkbox" />
            NR
            <Chevron dir="up" />
          </SelectAll>
        </th>
        <Head>NAZWA</Head>
        <th />
        <Head>ODBIORCA</Head>
        <Head>DOSTAWCA</Head>
        <Head>CHECKLISTA</Head>
        <Head>STATUS</Head>
        <Head>AKCJE</Head>
      </HeadRow>
    </thead>
    <tbody>
      {tasks.map((task, i) => (
        <Row key={task.nr} $tall={task.tall} $odd={i % 2 === 0} $last={i === tasks.length - 1}>
          <td>
            <RowNumber>
              <Check type="checkbox" />
              {task.nr}
            </RowNumber>
          </td>
          <td>
            <Task>
              <Caret />
              <TaskBody>
                <Marker $on={task.late} />
                <Badge $color={badgeColors[task.type]}>{task.type}</Badge>
                <span>{task.name}</span>
              </TaskBody>
            </Task>
          </td>
          <td />
          <td>{task.client && <Client href="#">Firma Demo nr 1</Client>}</td>
          <td />
          <td>
            <Progress>
              <ProgressFill $done={task.done > 0} style={{ width: `${task.done}%` }}>
                {task.done}%
              </ProgressFill>
            </Progress>
          </td>
          <td>
            <Status $color={statusColors[task.status]}>{task.status}</Status>
          </td>
          <td>
            <RowActions>
              <EditButton aria-label="Edytuj">
                <PencilIcon />
              </EditButton>
              <PlainButton $color="#42a5e8" aria-label="Więcej">
                <KebabIcon />
              </PlainButton>
            </RowActions>
          </td>
        </Row>
      ))}
      <Spacer />
    </tbody>
  </Table>
);

const TemplateModal = () => {
  const [checked, setChecked] = useState([true, false, false]);
  const toggle = (i) => setChecked(checked.map((value, j) => (i === j ? !value : value)));

  return (
    <Backdrop>
      <Modal role="dialog" aria-labelledby="modal-title">
        <CloseButton aria-label="Zamknij okno">
          <CrossIcon />
        </CloseButton>
        <ModalTitle id="modal-title">Dodaj zadanie z Szablonu</ModalTitle>
        <Field>
          <FieldLabel htmlFor="type">Typ zadania</FieldLabel>
          <SelectBox>
            <select id="type">
              <option>Zadanie serwisowe</option>
            </select>
            <Chevron />
          </SelectBox>
        </Field>
        <Field>
          <FieldLabel htmlFor="template">Szablon</FieldLabel>
          <SelectBox>
            <select id="template">
              <option>Serwis PC - TYP / 1</option>
            </select>
            <Chevron />
          </SelectBox>
        </Field>
        <Field $gap={25}>
          <FieldLabel htmlFor="name">Nazwa</FieldLabel>
          <div>
            <TextInput id="name" defaultValue="Serwis PC - TYP / 1" />
            <HintBlock>
              <Hint>Zmienne (klinkij, aby wstawić):</Hint>
              <Variables>
                {variables.map((name) => (
                  <Chip key={name}>{name}</Chip>
                ))}
              </Variables>
              <Hint>
                Przykład: <b>Serwis {"{NAZWA ODBIORCY} {OSOBA DO KONTAKTU} {FOLDER}"}</b>
              </Hint>
            </HintBlock>
          </div>
        </Field>
        <Field $gap={24}>
          <FieldLabel htmlFor="client">Odbiorca</FieldLabel>
          <div>
            <SelectBox>
              <select id="client">
                <option>Firma Demo nr 1</option>
              </select>
              <Chevron />
            </SelectBox>
            <AddClient $bg="#66ae5b">dodaj odbiorcę</AddClient>
          </div>
        </Field>
        <Field $gap={70}>
          <FieldLabel htmlFor="folder">Przyporządkuj do folderu</FieldLabel>
          <FolderBox>
            <p>Wybierz folder (możesz przyporządkować do kilku folderów)</p>
            <TextInput id="folder" placeholder="Szukaj folderu..." />
            {folders.map((folder, i) => (
              <FolderOption key={folder}>
                <Check type="checkbox" checked={checked[i]} onChange={() => toggle(i)} />
                {folder}
              </FolderOption>
            ))}
          </FolderBox>
        </Field>
        <Field $gap={27}>
          <FieldLabel htmlFor="start">Data rozpoczęcia</FieldLabel>
          <TextInput id="start" $max="176px" defaultValue="29.05.2025 10:01" />
        </Field>
        <Field $gap={62}>
          <FieldLabel htmlFor="end">Data zakończenia</FieldLabel>
          <TextInput id="end" $max="176px" defaultValue="29.05.2025 10:31" />
        </Field>
        <ModalFooter>
          <SmallButton $bg="#65adff">Utwórz zadanie</SmallButton>
          <SmallButton $bg="#6d7680">Zamknij</SmallButton>
        </ModalFooter>
      </Modal>
    </Backdrop>
  );
};

const App = () => (
  <Screen>
    <GlobalStyle />
    <BrowserBar />
    <Page>
      <SideBar />
      <Main>
        <TopBar>
          <TopLeft>
            <PlainButton aria-label="Menu boczne">
              <Svg w={16} h={14}>
                <path d="M0 0h16v2H0Zm0 4h16v2H0Zm0 4h16v2H0Zm0 4h16v2H0Z" />
              </Svg>
            </PlainButton>
            <AddButton>
              Dodaj <PlusCircleIcon />
            </AddButton>
            <GlobalSearch>
              <SearchIcon />
              <input placeholder="Wyszukaj" aria-label="Wyszukaj" />
            </GlobalSearch>
          </TopLeft>
          <Partner>
            <GearLogo />
            <span>
              software-<b>PRO</b>
              <i>.</i>
            </span>
          </Partner>
          <TopRight>
            <span>Cz. 29.05.2025</span>
            <Clock>
              10<i>:</i>01
            </Clock>
            <ChatButton aria-label="Czat">
              <BubblesIcon />
            </ChatButton>
            <WLogo $size={44} $radius={20} $font={26}>W</WLogo>
            <ListButton aria-label="Lista">
              <ScrollIcon />
            </ListButton>
          </TopRight>
        </TopBar>
        <Breadcrumb>
          <HomeIcon size={12} />
          <a href="#">Pulpit</a>›<span>Zadania</span>
        </Breadcrumb>
        <Content>
          <DateRange>
            Zakres dat <DateIcon /> <span>1 maja 2025 - 31 maja 2025</span> <Caret />
          </DateRange>
          <Panel>
            <Tools>
              <FilterTools>
                <TableSearch>
                  <SearchIcon size={12} />
                  <input placeholder="Czego szukasz?" aria-label="Czego szukasz?" />
                </TableSearch>
                <FilterButton $bg="#eee" $color="#333">
                  <FilterIcon /> Filtruj
                </FilterButton>
              </FilterTools>
              <Actions>
                <Button>
                  <PlusCircleIcon /> Dodaj zadanie
                </Button>
                <Button>
                  <PlusCircleIcon /> Dodaj zadanie z Szablonu
                </Button>
                <Button $bg="#fafafa" $color="#222">
                  <FaMapLocationDot size={16} /> Mapa
                </Button>
              </Actions>
            </Tools>
            <TaskTable />
            <Footer>
              <Summary>Pozycje od 1 do 8 | Wszystkie: 8</Summary>
              <Exports>
                {["kopiuj", "csv", "excel", "pdf", "drukuj"].map((name) => (
                  <ExportButton key={name} $bg="#505050">
                    {name}
                  </ExportButton>
                ))}
              </Exports>
              <PageSize>
                Wyświetl:
                <select defaultValue="10">
                  <option>10</option>
                </select>
              </PageSize>
              <Pager>
                <PagerArrow aria-label="Poprzednia">←</PagerArrow>
                <CurrentPage>1</CurrentPage>
                <PagerArrow aria-label="Następna">→</PagerArrow>
              </Pager>
            </Footer>
          </Panel>
        </Content>
      </Main>
      <TemplateModal />
    </Page>
  </Screen>
);

export default App;
